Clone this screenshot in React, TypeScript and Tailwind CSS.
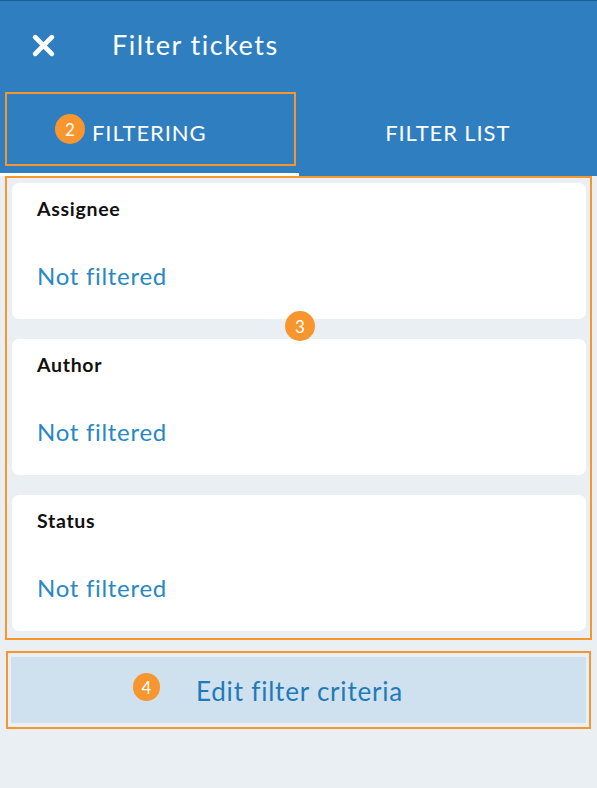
import React from "react";

const sections = ["Assignee", "Author", "Status"];

function Badge({ n, className }: { n: number; className: string }) {
  return (
    <span
      className={`absolute flex items-center justify-center rounded-full bg-[#f7962f] text-[17px] leading-none text-white ${className}`}
    >
      {n}
    </span>
  );
}

export default function App() {
  return (
    <div className="relative h-[788px] w-[597px] overflow-hidden bg-[#eaeff4] font-['Lato','Noto_Sans',sans-serif]">
      <header className="border-t border-[#1d5e90] bg-[#2f7ec0] text-white">
        <div className="flex h-[89px] items-center">
          <svg
            viewBox="0 0 24 24"
            className="ml-[31px] h-[25px] w-[25px]"
            fill="none"
            stroke="white"
            strokeWidth="4.6"
            strokeLinecap="round"
          >
            <path d="M4 4 L20 20 M20 4 L4 20" />
          </svg>
          <h1 className="mb-[3px] ml-[56px] text-[27px] leading-none tracking-[1.5px]">
            Filter tickets
          </h1>
        </div>
        <div className="flex h-[86px]">
          <div className="relative flex flex-1 items-center justify-center text-[22px] tracking-[0.9px]">
            <span className="mt-[-1px]">FILTERING</span>
            <span className="absolute bottom-0 left-0 h-[3px] w-full bg-white" />
          </div>
          <div className="flex flex-1 items-center justify-center text-[22px] tracking-[0.9px]">
            <span className="mt-[-1px]">FILTER LIST</span>
          </div>
        </div>
      </header>

      <main className="pl-[12px] pr-[11px] pt-[7px]">
        <div className="flex flex-col gap-[20px]">
          {sections.map((s) => (
            <section
              key={s}
              className="h-[136px] rounded-[7px] bg-white pl-[25px] pt-[15px]"
            >
              <h2 className="text-[19.5px] font-bold leading-[22px] tracking-[0.7px] text-[#111]">
                {s}
              </h2>
              <p className="mt-[43px] text-[24px] leading-[26px] tracking-[0.7px] text-[#2788c4]">
                Not filtered
              </p>
            </section>
          ))}
        </div>
        <button className="-ml-[1px] mt-[26px] flex h-[66px] w-[575px] items-center justify-center bg-[#cfe1ee] pl-[2px] pt-[3px] text-[26px] tracking-[0.8px] text-[#1f7ab9]">
          Edit filter criteria
        </button>
      </main>

      {/* annotation overlays */}
      <div className="pointer-events-none absolute left-[5px] top-[92px] h-[74px] w-[291px] border-2 border-[#f7962f]" />
      <div className="pointer-events-none absolute left-[5px] top-[176px] h-[464px] w-[587px] border-2 border-[#f7962f]" />
      <div className="pointer-events-none absolute left-[6px] top-[651px] h-[78px] w-[585px] border-2 border-[#f7962f]" />
      <Badge n={2} className="left-[55px] top-[114px] h-[30px] w-[30px]" />
      <Badge n={3} className="left-[285px] top-[311px] h-[30px] w-[30px]" />
      <Badge n={4} className="left-[133px] top-[673px] h-[28px] w-[27px]" />
    </div>
  );
}
